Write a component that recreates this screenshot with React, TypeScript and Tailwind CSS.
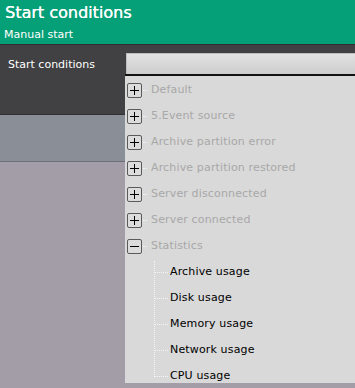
import React from "react";

const font = { fontFamily: '"DejaVu Sans", Verdana, sans-serif' };

function Box({ minus }: { minus?: boolean }) {
  return (
    <div className="relative w-[15px] h-[15px] border border-[#5a5a5a] rounded-[2px] bg-[#dcdcdc] flex items-center justify-center shrink-0">
      <div className="absolute w-[9px] h-[1px] bg-black" />
      {!minus && <div className="absolute w-[1px] h-[9px] bg-black" />}
    </div>
  );
}

const parents = [
  "Default",
  "5.Event source",
  "Archive partition error",
  "Archive partition restored",
  "Server disconnected",
  "Server connected",
];
const children = ["Archive usage", "Disk usage", "Memory usage", "Network usage", "CPU usage"];

export default function App() {
  return (
    <div className="relative w-[355px] h-[388px] overflow-hidden bg-[#a39da7]" style={font}>
      <div className="h-[44px] bg-[#06a078] text-white pl-[5px]">
        <div className="text-[16px] leading-[19px] pt-[3px] [text-shadow:0.3px_0_0_white]">Start conditions</div>
        <div className="text-[11px] leading-[13px] pt-[6px] -ml-[1px]">Manual start</div>
      </div>
      <div className="h-[71px] bg-[#414143] border-t border-[#2d2d2f] border-b border-b-[#303032] text-white text-[11px] pl-[8px] pt-[12px]">
        Start conditions
      </div>
      <div className="h-[47px] bg-[#8a8e96] border-b border-[#6e7079]" />

      {/* dropdown */}
      <div className="absolute left-[126px] top-[53px] right-0 h-[21px] border-l border-t border-[#bdbdbd] bg-gradient-to-b from-[#e2e2e2] to-[#cdcdcd]" />
      <div className="absolute left-[125px] top-[74px] right-0 h-[2px] bg-[#111]" />
      <div className="absolute left-[125px] top-[76px] right-0 h-[307px] bg-[#d9d9d9] text-[11px] pt-[1px]">
        {parents.map((p) => (
          <div key={p} className="h-[26px] flex items-center pl-[2px]">
            <Box />
            <div className="w-[4px] border-t border-dotted border-[#f4f4f4] ml-[1px]" />
            <span className="ml-[4px] text-[#a8a8a8] tracking-[0.15px]">{p}</span>
          </div>
        ))}
        <div className="h-[26px] flex items-center pl-[2px]">
          <Box minus />
          <div className="w-[4px] border-t border-dotted border-[#f4f4f4] ml-[1px]" />
          <span className="ml-[4px] text-[#a8a8a8] tracking-[0.15px]">Statistics</span>
        </div>
        <div className="relative pl-[29px]">
          <div className="absolute left-[29px] top-[2px] h-[116px] border-l border-dotted border-[#f4f4f4]" />
          {children.map((c) => (
            <div key={c} className="h-[26px] flex items-center">
              <div className="w-[13px] border-t border-dotted border-[#f4f4f4] ml-[1px]" />
              <span className="ml-[2px] text-black tracking-[0.15px]">{c}</span>
            </div>
          ))}
        </div>
      </div>
    </div>
  );
}
